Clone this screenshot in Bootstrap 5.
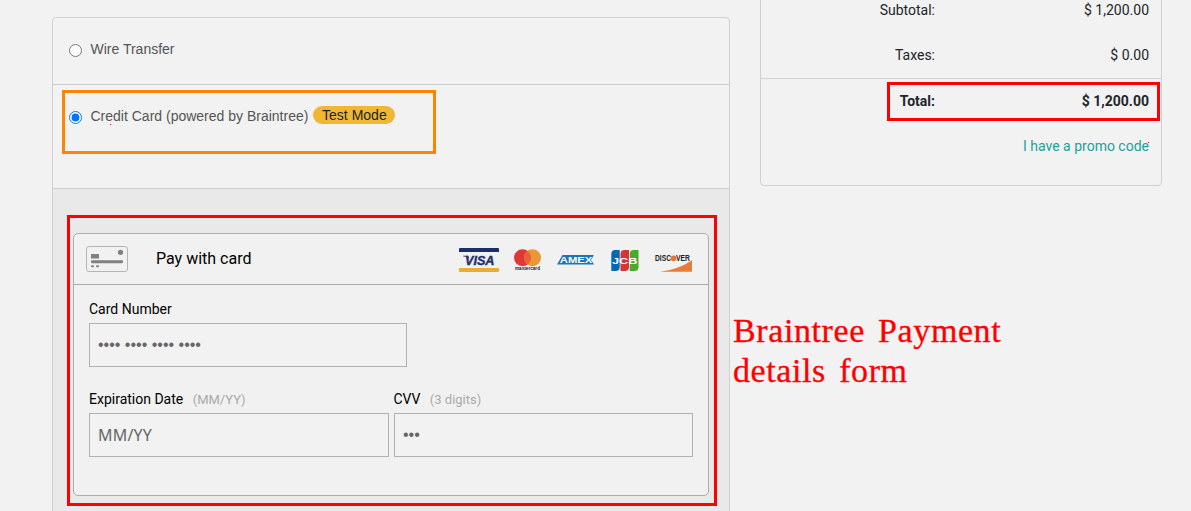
<!DOCTYPE html>
<html lang="en">
<head>
<meta charset="utf-8">
<title>Payment</title>
<link href="https://cdn.jsdelivr.net/npm/bootstrap@5.3.0/dist/css/bootstrap.min.css" rel="stylesheet">
<style>
body{background:#f2f2f2;font-family:Roboto,sans-serif;font-size:14px;line-height:20px;color:#212529;overflow:hidden}
.page{height:511px;padding-left:52px;gap:30px;overflow:hidden}
.methods{width:678px;margin-top:17px;height:520px;border:1px solid #cfd0d1;border-radius:4px 4px 0 0;background:#f2f2f2}
.method{border-bottom:1px solid #cbcccd;padding-left:16px;font-family:"Liberation Sans",sans-serif;color:#555}
.method.wire{height:67px;padding-top:21px}
.method.cc{height:104px;padding-top:21px}
.method input{width:13px;height:13px;margin:5px 8.5px 0 0;flex:none}
.pill{background:#f0b735;color:#212529;border-radius:10px;height:18px;line-height:19px;width:82px;margin-left:4.5px;padding-left:1px;text-align:center}
.drop-area{background:#e9e9e9;height:400px;padding:44px 0 0 20px}
.dropin{width:636px;height:263px;border:1px solid #adadad;border-radius:5px;background:#f1f1f1;color:#000}
.dropin-head{height:51px;border-bottom:1px solid #a9a9a9;padding:0 0 0 12px}
.dropin-head .heading{font-size:16px;margin-left:28px;line-height:20px}
.logos{margin-left:auto;margin-right:16px}
.fields{padding:14px 15px 0}
.flabel{height:24px;line-height:20px}
.flabel span{font-size:13px;color:#aaa;margin-left:6px}
.flabel.shift{margin-left:-.6px}
.field{height:44px;border:1px solid #b1b1b1;border-radius:0;background:#f2f2f2;padding:0 8px;font:16px/42px "Noto Sans",sans-serif;display:block}
.field::placeholder{color:#666;opacity:1}
.w-num{width:318px}.w-exp{width:300px;letter-spacing:.2px}.w-cvv{width:299px}
.dots,.dots::placeholder{font-family:"Liberation Sans",sans-serif}
.summary{width:402px;height:199px;margin-top:-13px;border:1px solid #cfd0d1;border-radius:4px}
.line{height:45px;padding:0 12px 2px 0}
.line .what{width:174px;text-align:right}
.line.ruled{height:46px;border-bottom:1px solid #cfd0d1}
.promo{color:#219f9d;text-decoration:none}
.frame{position:absolute;border:3px solid #f00;pointer-events:none}
.f-orange{border-color:#ff8400;left:9px;top:5px;width:374px;height:64px}
.f-form{left:14px;top:26px;width:650px;height:291px}
.f-total{left:126px;top:3px;width:273px;height:39px}
.speck{position:absolute;width:1px;height:1px;background:#f00}
.note{color:#f00;font:34px/40px "Liberation Serif",serif;letter-spacing:.6px;word-spacing:-2.5px;-webkit-text-stroke:.3px #f00;margin:125px 0 0 -27px;white-space:nowrap}
</style>
</head>
<body>
<main class="page d-flex">
  <section class="methods flex-shrink-0">
    <label class="method wire d-flex align-items-start"><input type="radio" name="m"><span>Wire Transfer</span></label>
    <label class="method cc d-flex align-items-start position-relative"><input type="radio" name="m" checked><span>Credit Card (powered by Braintree)</span><span class="pill">Test Mode</span><i class="frame f-orange"></i><i class="speck" style="left:57px;top:39px"></i></label>
    <div class="drop-area position-relative">
      <div class="dropin">
        <div class="dropin-head d-flex align-items-center">
          <svg width="42" height="26" viewBox="0 0 42 26"><rect x=".5" y=".5" width="41" height="25" rx="2.5" fill="none" stroke="#b5b5b5"/><g fill="#808080"><rect x="5" y="8" width="8" height="4.500"/><rect x="5" y="14.200" width="32" height="3" rx="1.2"/><circle cx="34.500" cy="6.300" r="2.600"/><rect x="5" y="19.200" width="3" height="2" rx="1"/><rect x="10" y="19.200" width="3" height="2" rx="1"/></g></svg>
          <span class="heading">Pay with card</span>
          <svg class="logos" width="234" height="28" viewBox="458 245 234 28" font-family="Liberation Sans, sans-serif">
            <path d="M459 252v-3q0-1 1-1h38q1 0 1 1v3z" fill="#1a2e6c"/><path d="M459 268v3q0 1 1 1h38q1 0 1-1v-3z" fill="#ecab35"/>
            <text x="465" y="265" font-size="13" font-weight="700" font-style="italic" fill="#202e70" stroke="#202e70" stroke-width=".4" textLength="29.500" lengthAdjust="spacingAndGlyphs">VISA</text><path d="M463 255.700h5l1.500 3q-3-2-6.500-2.400z" fill="#202e70"/>
            <circle cx="522.500" cy="257.700" r="8.500" fill="#e03838"/><circle cx="532.500" cy="257.700" r="8.500" fill="#eb9735"/><path d="M527.500 250.800a8.500 8.500 0 0 1 0 13.800a8.500 8.500 0 0 1 0-13.800z" fill="#eb6038"/>
            <text x="515" y="270" font-size="5.500" font-weight="700" fill="#222" textLength="25" lengthAdjust="spacingAndGlyphs">mastercard</text>
            <path d="M557 264.500l5.500-9.500h31.500l-3.800 4.700 3.800 4.800z" fill="#1977b9"/>
            <text x="559.800" y="263.200" font-size="9.800" font-weight="700" fill="#fff" stroke="#1977b9" stroke-width="1.200" paint-order="stroke" textLength="32.500" lengthAdjust="spacingAndGlyphs">AMEX</text>
            <path d="M611.300 267v-13q0-4 4-4h4.400v17q0 4-4 4h-4.400z" fill="#0068b5"/><path d="M620.500 271v-17q0-4 4-4h4.500v17q0 4-4 4z" fill="#d73339"/><path d="M629.700 271v-17q0-4 4-4h4.800v17q0 4-4 4z" fill="#4ba92e"/>
            <text x="612" y="263.700" font-size="9" font-weight="700" fill="#fff" textLength="25.500" lengthAdjust="spacingAndGlyphs">JCB</text>
            <text x="655" y="261.400" font-size="8.500" font-weight="700" fill="#222" textLength="16" lengthAdjust="spacingAndGlyphs">DISC</text><text x="676" y="261.400" font-size="8.500" font-weight="700" fill="#222" textLength="14" lengthAdjust="spacingAndGlyphs">VER</text><circle cx="673.600" cy="258.300" r="2.900" fill="#eb7434"/>
            <path d="M660 271.800q18-2 32-11.500v11.500z" fill="#e87b38"/>
          </svg>
        </div>
        <div class="fields">
          <div class="flabel">Card Number</div>
          <input class="field dots w-num" placeholder="•••• •••• •••• ••••">
          <div class="d-flex" style="gap:5px;margin-top:22px">
            <div><div class="flabel">Expiration Date <span>(MM/YY)</span></div><input class="field w-exp" placeholder="MM/YY"></div>
            <div><div class="flabel shift">CVV <span>(3 digits)</span></div><input class="field dots w-cvv" placeholder="•••"></div>
          </div>
        </div>
      </div>
      <i class="frame f-form"></i>
    </div>
  </section>
  <aside>
    <div class="summary">
      <div class="line d-flex justify-content-between align-items-center"><span class="what">Subtotal:</span><span>$ 1,200.00</span></div>
      <div class="line ruled d-flex justify-content-between align-items-center"><span class="what">Taxes:</span><span>$ 0.00</span></div>
      <div class="line d-flex justify-content-between align-items-center fw-bold position-relative"><span class="what">Total:</span><span>$ 1,200.00</span><i class="frame f-total"></i></div>
      <div class="line d-flex justify-content-end align-items-center position-relative"><a class="promo" href="#">I have a promo code</a><i class="speck" style="right:12px;top:18px"></i></div>
    </div>
    <div class="note">Braintree&nbsp; Payment<br>details&nbsp; form</div>
  </aside>
</main>
<script src="https://cdn.jsdelivr.net/npm/bootstrap@5.3.0/dist/js/bootstrap.bundle.min.js"></script>
</body>
</html>
